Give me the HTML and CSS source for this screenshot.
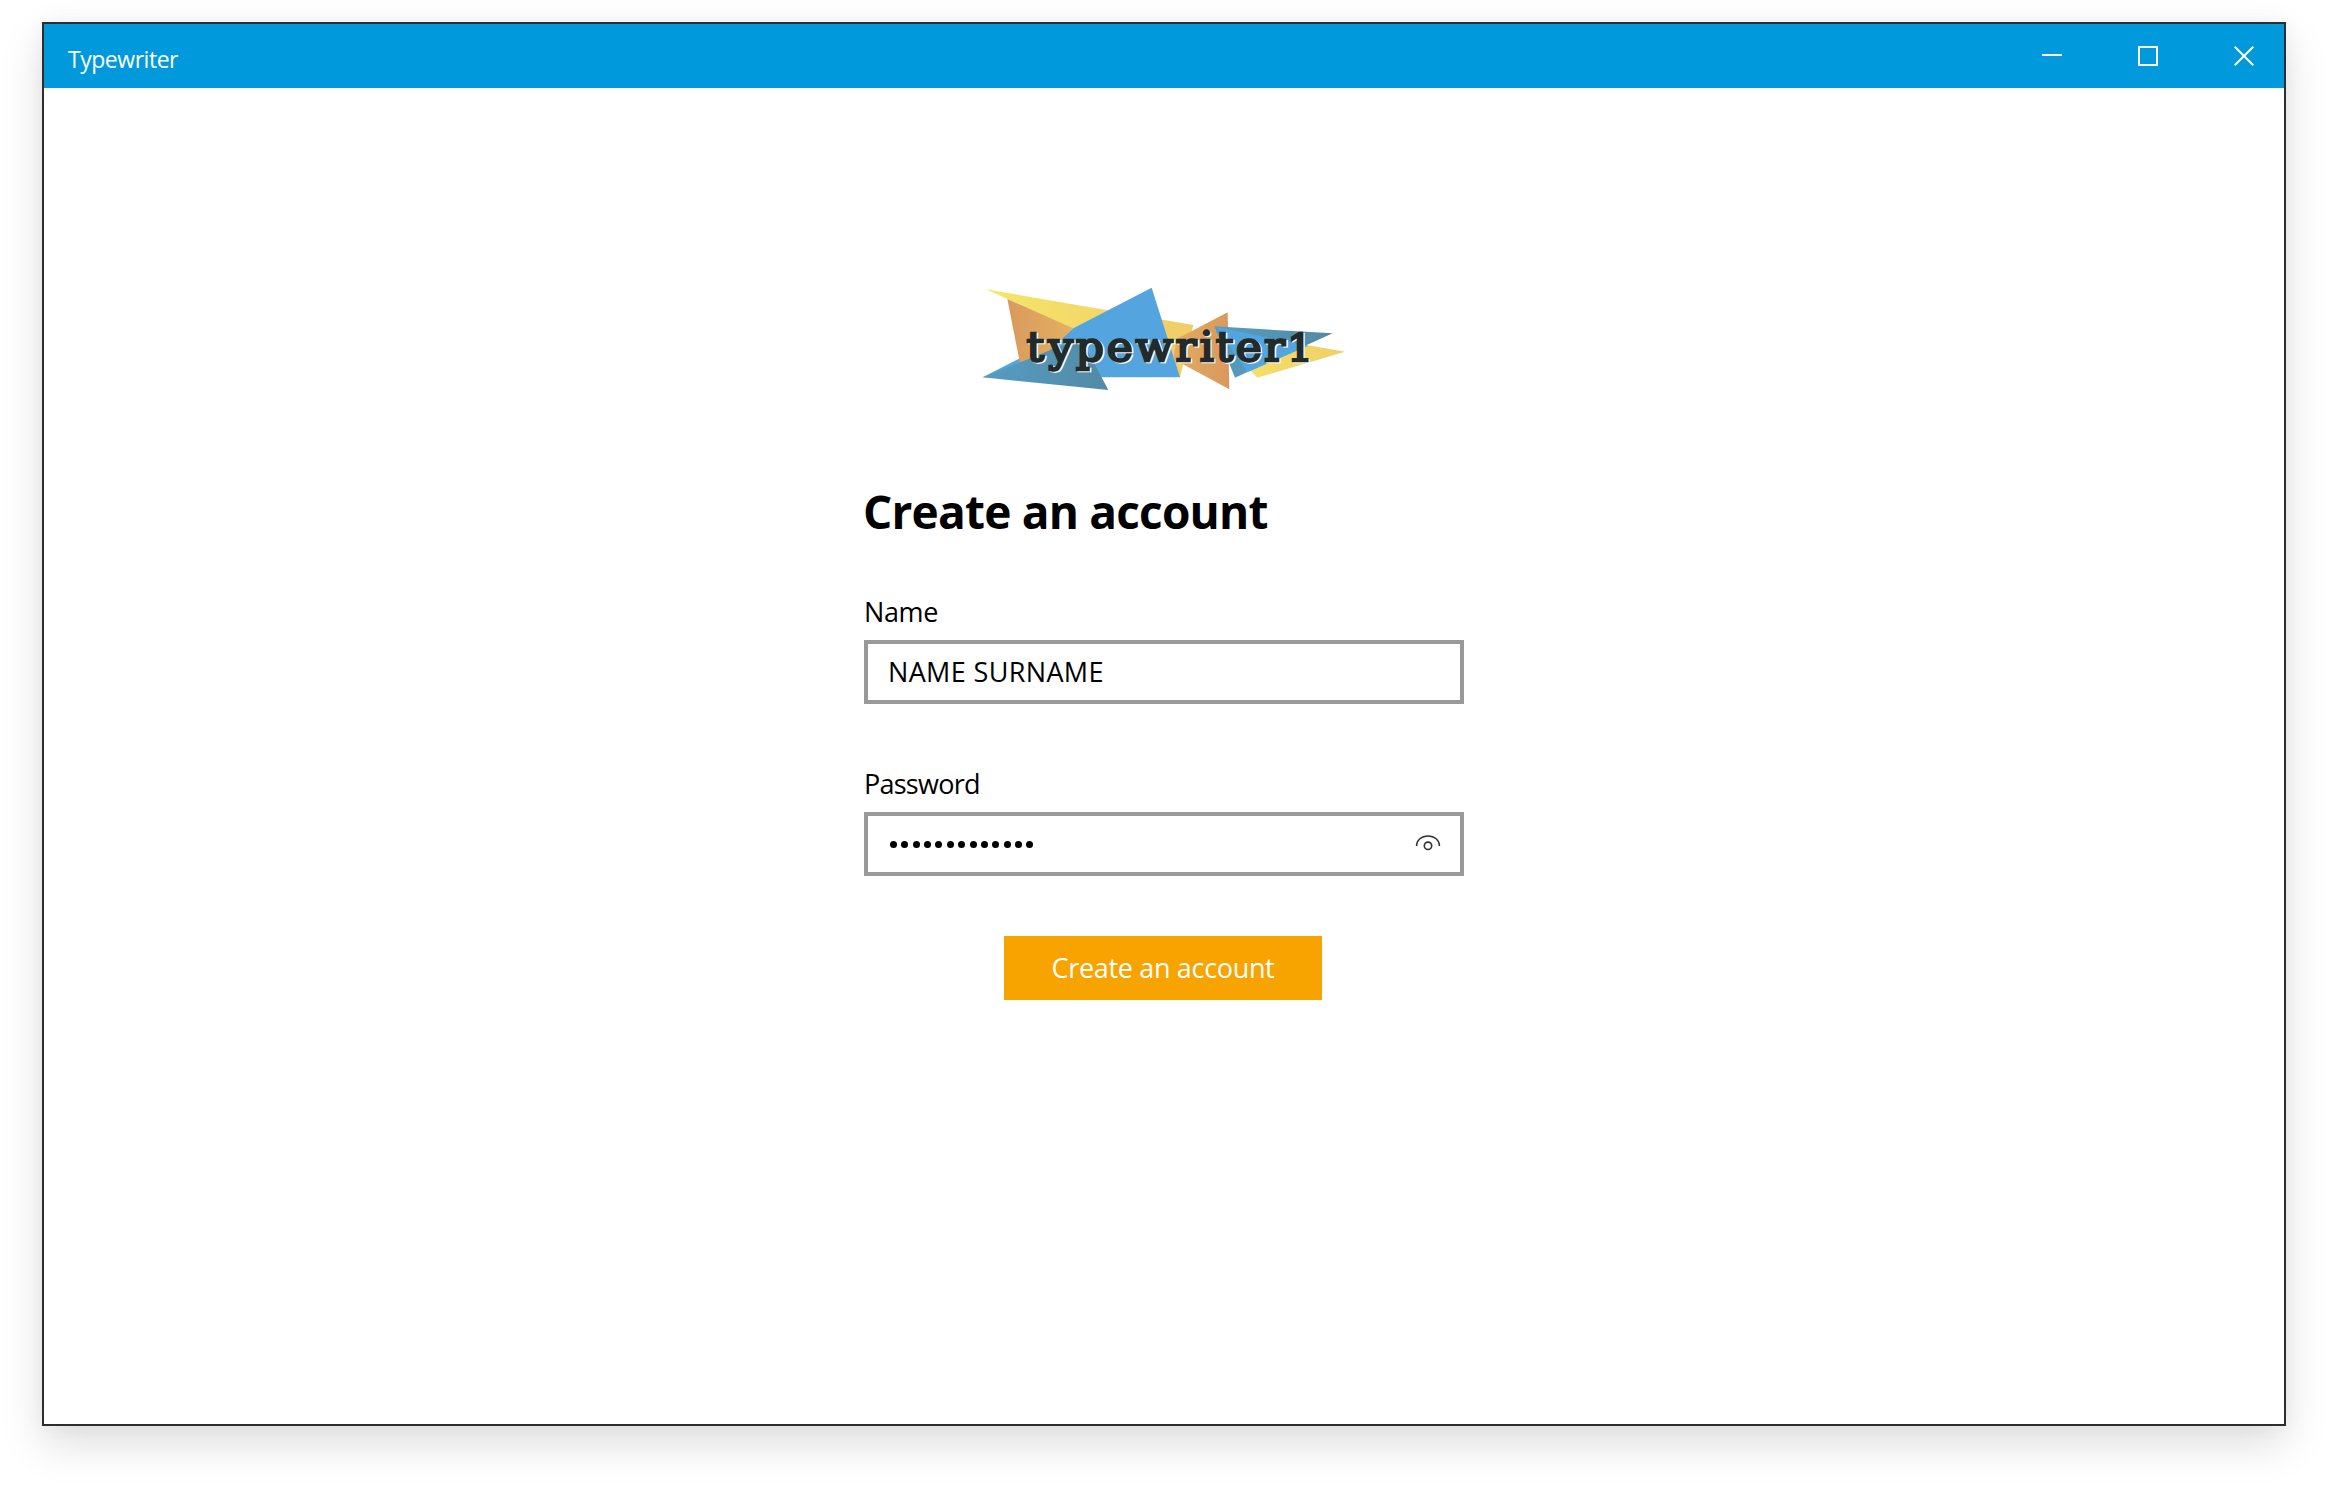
FILE: index.html
```html
<!DOCTYPE html>
<html lang="en">
<head>
<meta charset="utf-8">
<title>Typewriter</title>
<link rel="stylesheet" href="styles.css">
</head>
<body>
<div class="window">
  <header class="titlebar">
    <span class="title">Typewriter</span>
    <div class="controls">
      <svg width="20" height="20" viewBox="0 0 20 20"><path d="M0 9H20"/></svg>
      <svg width="20" height="20" viewBox="0 0 20 20"><path d="M1 1H19V19H1Z"/></svg>
      <svg width="20" height="20" viewBox="0 0 20 20"><path d="M.7 .7L19.3 19.3M19.3 .7L.7 19.3"/></svg>
    </div>
  </header>
  <main class="content">
    <svg class="logo" width="390" height="130" viewBox="-3 0 1170 390">
      <defs>
        <linearGradient id="yellow"><stop offset="0" stop-color="#f5e669"/><stop offset="1" stop-color="#f0cc68"/></linearGradient>
        <linearGradient id="yellow2"><stop offset="0" stop-color="#f3df68"/><stop offset="1" stop-color="#f1ce68"/></linearGradient>
        <linearGradient id="orange"><stop offset="0" stop-color="#d99a5d"/><stop offset="1" stop-color="#e4b062"/></linearGradient>
        <linearGradient id="orange2"><stop offset="0" stop-color="#e3ab62"/><stop offset="1" stop-color="#d9995d"/></linearGradient>
        <linearGradient id="teal"><stop offset="0" stop-color="#559dc2"/><stop offset="1" stop-color="#528aa6"/></linearGradient>
      </defs>
      <path fill="url(#yellow)" d="M48 43L670 150L630 307L320 165Z"/>
      <path fill="#54a4e0" d="M310 160L545 38L630 307H38L150 250L245 215Z"/>
      <path fill="url(#orange)" d="M112 72L310 160L240 226L150 265Z"/>
      <path fill="url(#teal)" d="M38 307L235 228L333 190L415 345Z"/>
      <path fill="url(#orange2)" d="M620 192L773 112L778 343L610 252Z"/>
      <path fill="url(#yellow2)" d="M840 285L1010 210L1125 230L862 308Z"/>
      <path fill="url(#teal)" d="M733 154L1088 175L795 308Z"/>
      <path fill="#54a4e0" d="M740 156L1015 212L832 292Z"/>
      <g class="wordmark" transform="scale(1.08 1)">
        <text class="halo" y="261" x="161 221.5 298 384 464 575 642 687 742 821 885" aria-hidden="true">typewriter<tspan class="digit">1</tspan></text>
        <text y="257" x="157 217.5 294 380 460 571 638 683 738 817 881">typewriter<tspan class="digit">1</tspan></text>
      </g>
    </svg>
    <form class="form">
      <h1>Create an account</h1>
      <div class="field">
        <label class="name-label">Name</label>
        <div class="box"><span class="value">NAME SURNAME</span></div>
      </div>
      <div class="field">
        <label>Password</label>
        <div class="box">
          <span class="dots"><i></i><i></i><i></i><i></i><i></i><i></i><i></i><i></i><i></i><i></i><i></i><i></i><i></i></span>
          <svg class="eye" width="26" height="18" viewBox="0 0 26 18"><path d="M1.6 12C1.6 6 6.5 2 13 2S24.4 6 24.4 12"/><circle cx="13" cy="11.8" r="3.7"/></svg>
        </div>
      </div>
      <button class="submit" type="button">Create an account</button>
    </form>
  </main>
</div>
</body>
</html>
```
FILE: styles.css
```css
* { box-sizing: border-box; }
body {
  margin: 0;
  min-height: 1487px;
  padding: 22px 42px 61px;
  background: #fff;
  color: #000;
  font-family: "Open Sans", "Noto Sans", sans-serif;
  overflow: hidden;
}
.window {
  display: flex;
  flex-direction: column;
  height: 1404px;
  border: 2px solid #2d2d30;
  background: #fff;
  box-shadow: 0 18px 40px rgba(0, 0, 0, .13), 0 0 20px rgba(0, 0, 0, .04);
}
.titlebar {
  display: flex;
  justify-content: space-between;
  height: 64px;
  padding: 0 30px 0 24px;
  background: #0099dc;
  color: #fff;
}
.title { font-size: 23px; line-height: 71px; letter-spacing: -.47px; }
.controls { display: flex; gap: 76px; padding-top: 22px; }
.controls svg { fill: none; stroke: #fff; stroke-width: 2; }
.content {
  display: flex;
  flex-direction: column;
  align-items: center;
  padding-top: 187px;
}
.logo { display: block; }
.wordmark {
  font: 122px "DejaVu Serif", serif;
  fill: #222a2a;
  stroke: #222a2a;
  stroke-width: 7px;
}
.halo { fill: #fff; stroke: #fff; }
.digit { font-size: 112px; }
.form { display: flex; flex-direction: column; width: 600px; }
h1 {
  margin: 74px 0 0 -1px;
  font-size: 46px;
  line-height: 64px;
  letter-spacing: -.8px;
  white-space: nowrap;
}
.field { margin-top: 51px; }
.field + .field { margin-top: 62px; }
label {
  display: block;
  height: 46px;
  font-size: 27px;
  line-height: 36px;
  letter-spacing: -.75px;
}
.name-label { letter-spacing: -.4px; }
.box {
  display: flex;
  align-items: center;
  justify-content: space-between;
  height: 64px;
  padding: 0 19px 0 20px;
  border: 4px solid #999;
}
.value { font-size: 27px; line-height: 56px; letter-spacing: .36px; }
.dots { display: flex; gap: 4.37px; padding: 1px 0 0 2px; }
.dots i { width: 7px; height: 7px; border-radius: 50%; background: #000; }
.eye { margin-bottom: 2px; fill: none; stroke: #333; stroke-width: 1.6; }
.submit {
  align-self: center;
  width: 318px;
  height: 64px;
  margin: 60px 2px 0 0;
  padding: 0;
  border: 0;
  background: #f7a300;
  color: #fff;
  font: 27px/64px "Open Sans", "Noto Sans", sans-serif;
  letter-spacing: -.33px;
}
```
